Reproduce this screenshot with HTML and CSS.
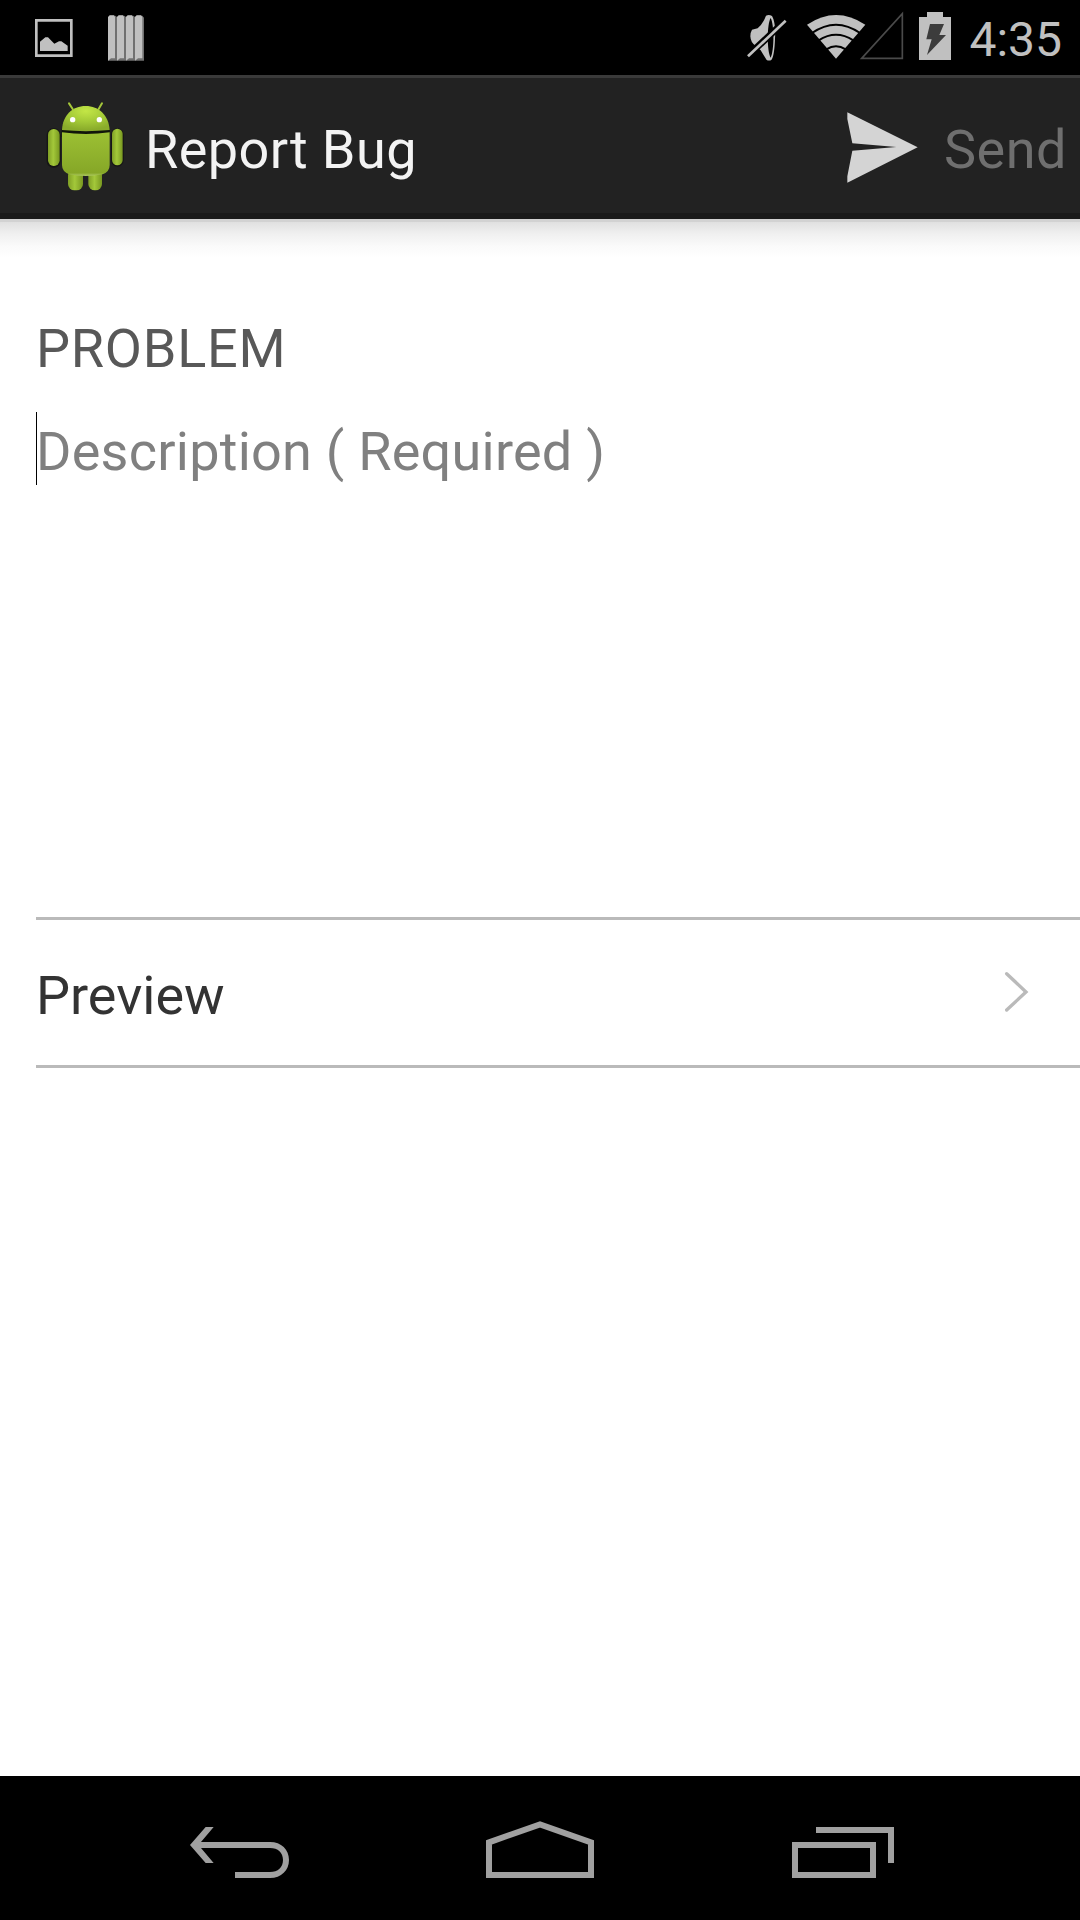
FILE: index.html
```html
<!DOCTYPE html>
<html lang="en">
<head>
<meta charset="utf-8">
<title>Report Bug</title>
<link rel="stylesheet" href="styles.css">
</head>
<body>
<div class="screen">
  <header class="status-bar">
    <div class="notifications">
      <svg width="38" height="38" viewBox="105 57 114 114"><path fill="none" stroke="#c0c0c0" stroke-width="8" d="M109 61H214V167H109Z"/><path fill="#c0c0c0" d="M120 153V125L136 112H144L163 131L177 124H184L203 137V153Z"/></svg>
      <svg class="bars" width="36" height="46" viewBox="324 44 108 138">
        <path fill="#707070" d="M330 46H346L351 50L356 46H373L378 50L383 46H400L405 50L410 46H427L432 52V181H324V52Z"/>
        <path fill="#c0c0c0" d="M324 50L329 45H342L345 50V174H333L324 181ZM351 50L356 45H369L372 50V174H360L351 181ZM378 50L383 45H396L399 50V174H387L378 181ZM405 50L410 45H423L427 50V174H414L405 181Z"/>
      </svg>
    </div>
    <div class="indicators">
      <svg class="mute" width="42" height="48" viewBox="47 41 126 144">
        <path fill="#c0c0c0" fill-rule="evenodd" d="M107 46Q116 42 125 47C133 60 136 85 134 115C133 145 130 170 123 179Q116 182 109 179L91 150L76 136Q61 128 60 108Q60 96 65 88L82 84Q98 70 107 46ZM121 53C110 70 109 152 121 172C132 150 132 72 121 53Z"/>
        <path stroke="#000" stroke-width="20" d="M48 171L170 56"/><path stroke="#c0c0c0" stroke-width="8" d="M53 168L166 61"/>
      </svg>
      <svg class="network" width="99" height="50" viewBox="230 32 297 150">
        <path fill="#c0c0c0" d="M233 73Q320 15 408 73L320 175Z"/>
        <path fill="none" stroke="#000" stroke-width="6" d="M248 98Q320 48 392 98M268 120Q320 86 372 120M291 147Q320 128 349 147"/>
        <path fill="none" stroke="#4a4a4a" stroke-width="5" d="M397 174L519 40V174Z"/>
      </svg>
      <svg class="battery" width="32" height="48" viewBox="567 36 96 144"><path fill="#c0c0c0" d="M567 51H591V36H639V51H663V180H567Z"/><path fill="#3c3c3c" d="M600 72H642L628 105H648L591 165L605 118H589Z"/></svg>
      <span class="clock">4:35</span>
    </div>
  </header>
  <div class="action-bar">
    <svg class="robot" width="110" height="120" viewBox="0 0 330 360">
      <defs>
        <linearGradient id="limb" x1="0" x2="1"><stop offset="0" stop-color="#7f9f25"/><stop offset=".45" stop-color="#a3c83a"/><stop offset="1" stop-color="#789820"/></linearGradient>
        <linearGradient id="torso" x1="0" y1="0" x2="0" y2="1"><stop offset="0" stop-color="#9cc033"/><stop offset=".6" stop-color="#8eb02c"/><stop offset=".93" stop-color="#86a727"/><stop offset="1" stop-color="#b0cc67"/></linearGradient>
        <radialGradient id="head" cx=".5" cy=".2" r=".75"><stop offset="0" stop-color="#c3e646"/><stop offset=".55" stop-color="#a4ca37"/><stop offset="1" stop-color="#8aac2b"/></radialGradient>
      </defs>
      <rect x="50" y="130" width="42" height="118" rx="20" fill="#151515"/><rect x="243" y="130" width="38" height="115" rx="19" fill="#151515"/>
      <path stroke="#a4c63a" stroke-width="6" stroke-linecap="round" d="M117 55L128 72M216 55L206 72"/>
      <rect x="114" y="250" width="45" height="66" rx="19" fill="url(#limb)"/>
      <rect x="175" y="250" width="41" height="66" rx="19" fill="url(#limb)"/>
      <rect x="54" y="132" width="35" height="111" rx="17" fill="url(#limb)"/>
      <rect x="246" y="131" width="32" height="110" rx="16" fill="url(#limb)"/>
      <path fill="#11150a" d="M95 132H239V156H95Z"/>
      <path fill="url(#head)" d="M96 135C98 91 127 63 167 63S236 91 239 135Q168 142 96 135Z"/>
      <path fill="url(#torso)" d="M96 142Q168 152 239 142V240Q239 260 218 268Q167 278 118 268Q96 260 96 240Z"/>
      <circle cx="128" cy="104" r="8" fill="#fff"/><circle cx="208" cy="104" r="8" fill="#fff"/>
    </svg>
    <h1 class="title">Report Bug</h1>
    <svg class="send-icon" width="72" height="72" viewBox="80 67 216 216"><path fill="#d4d4d4" d="M81 68L292 173L81 279V260L96 183L228 172L96 161L81 88Z"/></svg>
    <span class="send">Send</span>
  </div>
  <main class="content">
    <h2 class="section">PROBLEM</h2>
    <div class="description">Description ( Required )</div>
    <div class="preview">
      <span>Preview</span>
      <svg width="26" height="42" viewBox="134 213 78 126"><path fill="none" stroke="#bababa" stroke-width="10" stroke-linecap="round" d="M142 221L200 276L142 330"/></svg>
    </div>
  </main>
  <nav class="nav-bar">
    <svg width="140" height="140" viewBox="0 0 420 420"><path fill="#a0a0a0" d="M60 255L107 201H131L93 246H300C334 246 357 269 357 300S334 354 300 354H195V336H300C324 336 339 322 339 300S324 264 300 264H93L131 309H107Z"/></svg>
    <svg width="140" height="140" viewBox="0 0 420 420"><path fill="none" stroke="#a0a0a0" stroke-width="18" d="M57 247L210 193L363 247V345H57Z"/></svg>
    <svg width="140" height="140" viewBox="0 0 420 420"><path fill="none" stroke="#a0a0a0" stroke-width="18" d="M45 255H279V345H45ZM108 210H333V309"/></svg>
  </nav>
</div>
</body>
</html>
```
FILE: styles.css
```css
* { box-sizing: border-box; }
body { margin: 0; font-family: Roboto, sans-serif; font-size: 54px; }
svg { display: block; flex: none; }
.screen { width: 1080px; height: 1920px; display: flex; flex-direction: column; background: #fff; overflow: hidden; }

.status-bar { height: 75px; flex: none; display: flex; justify-content: space-between; align-items: flex-start; padding: 0 18px 0 35px; background: #000; }
.notifications { display: flex; gap: 35px; padding-top: 15px; }
.notifications svg:first-child { margin-top: 4px; }
.indicators { display: flex; align-items: flex-start; padding-top: 11px; color: #c0c0c0; }
.mute { margin: 3px 18px 0 0; }
.network { margin-right: 14px; }
.battery { margin: 1px 18px 0 0; }
.clock { font-size: 48px; line-height: 57px; }

.action-bar { height: 144px; flex: none; display: flex; align-items: flex-start; padding-left: 30px; padding-right: 13px; background: #222; border-top: 3px solid #3a3a3a; border-bottom: 6px solid #1a1a1a; }
.robot { margin-top: 7px; }
.title { margin: 0 auto 0 5px; font-size: 54px; font-weight: 400; line-height: 144px; letter-spacing: 0.45px; color: #f3f3f3; }
.send-icon { margin: 34px 25px 0 0; }
.send { line-height: 144px; letter-spacing: 0.5px; color: #6f6f6f; }

.content { flex: 1; padding: 98px 0 0 36px; background: linear-gradient(#d2d2d2 0 3px, #e0e0e0 3px, #f0f0f0 15px, #fafafa 27px, #fff 39px); }
.section { margin: 0; font-size: 54px; font-weight: 400; line-height: 64px; letter-spacing: 0.75px; color: #585858; }
.description { height: 505px; margin-top: 31px; background: linear-gradient(#000, #000) 0 0 / 1px 73px no-repeat; line-height: 80px; letter-spacing: 0.25px; color: #808080; }
.preview { height: 151px; display: flex; align-items: center; justify-content: space-between; padding-right: 50px; border: solid #bababa; border-width: 3px 0; color: #333; }
.preview span { margin-top: 5px; }
.preview svg { margin-bottom: 1px; }

.nav-bar { height: 144px; flex: none; display: grid; grid-template-columns: 300px 310px 140px; padding-left: 170px; background: #000; }
.nav-bar svg { margin-top: -16px; }
```
